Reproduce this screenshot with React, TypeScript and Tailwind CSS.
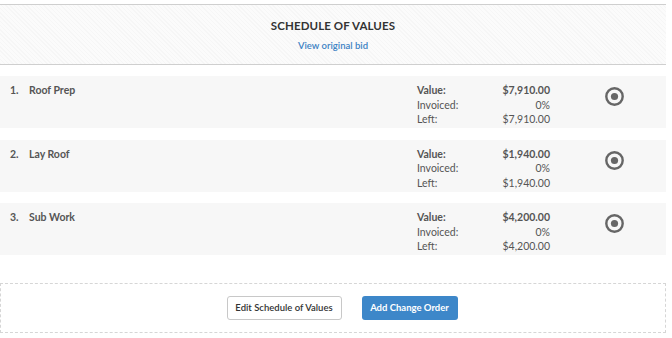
import { Fragment } from "react";

const ITEMS = [
  { n: 1, title: "Roof Prep", value: "$7,910.00", invoiced: "0%", left: "$7,910.00" },
  { n: 2, title: "Lay Roof", value: "$1,940.00", invoiced: "0%", left: "$1,940.00" },
  { n: 3, title: "Sub Work", value: "$4,200.00", invoiced: "0%", left: "$4,200.00" },
];

function TargetIcon() {
  return (
    <svg width="19" height="19" viewBox="0 0 19 19">
      <circle cx="9.5" cy="9.5" r="8.2" fill="none" stroke="#666" strokeWidth="2.4" />
      <circle cx="9.5" cy="9.5" r="3.6" fill="#666" />
    </svg>
  );
}

export default function App() {
  return (
    <div
      className="w-[666px] pt-[4px] bg-white text-[#555]"
      style={{ fontFamily: "Lato, 'Open Sans', sans-serif" }}
    >
      {/* HEADER */}
      <div
        className="
        h-[61px]
        border-y
        border-[#cfcfcf]
        bg-[repeating-linear-gradient(45deg,#f6f6f6_0,#f6f6f6_1px,#fbfbfb_1px,#fbfbfb_3px)]
        flex
        flex-col
        items-center
        "
      >
        <h1 className="mt-[14px] text-[11.5px] leading-[14px] font-bold text-[#333] tracking-[0.1px]">
          SCHEDULE OF VALUES
        </h1>
        <a className="mt-[7px] text-[9.5px] leading-[12px] font-semibold text-[#3d82c4]">
          View original bid
        </a>
      </div>

      {/* ROWS */}
      <div className="mt-[11px] flex flex-col gap-[11.5px]">
        {ITEMS.map((it) => (
          <div key={it.n} className="h-[52px] bg-[#f7f7f7] flex pl-[10px] pt-[8px]">
            <div className="w-[19px] text-[10.5px] leading-[12px] font-bold text-[#555]">
              {it.n}.
            </div>
            <div className="flex-1 text-[10.5px] leading-[12px] font-bold text-[#555]">
              {it.title}
            </div>
            <div className="w-[133px] grid grid-cols-2 text-[10.5px] leading-[12px] text-[#555]">
              {[
                ["Value:", it.value, true],
                ["Invoiced:", it.invoiced, false],
                ["Left:", it.left, false],
              ].map(([label, val, bold]) => (
                <Fragment key={label as string}>
                  <span className={bold ? "font-bold" : ""}>{label}</span>
                  <span className={"text-right " + (bold ? "font-bold" : "")}>{val}</span>
                </Fragment>
              ))}
            </div>
            <div className="w-[116px] flex justify-center pt-[3px] pl-[12px]">
              <TargetIcon />
            </div>
          </div>
        ))}
      </div>

      {/* ACTIONS */}
      <div
        className="
        mt-[28px]
        h-[50px]
        border
        border-dashed
        border-[#d6d6d6]
        flex
        items-center
        justify-center
        gap-[20px]
        pl-[18px]
        "
      >
        <button className="h-[24px] w-[115px] rounded-[3px] border border-[#c8c8c8] bg-white text-[9.5px] font-semibold text-[#333]">
          Edit Schedule of Values
        </button>
        <button className="h-[24px] w-[96px] rounded-[3px] bg-[#3d87c9] text-[9.5px] font-bold text-white">
          Add Change Order
        </button>
      </div>
    </div>
  );
}
